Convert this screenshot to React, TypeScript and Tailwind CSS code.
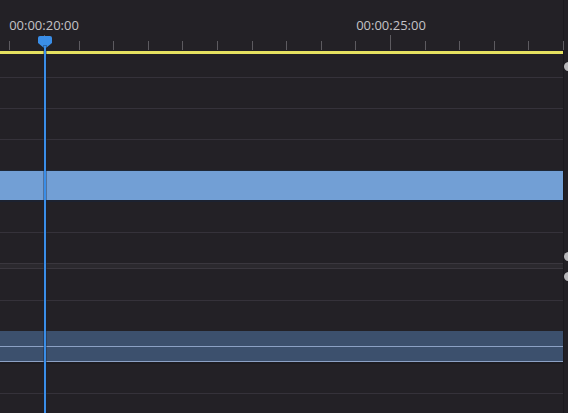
import React from 'react';

// timeline geometry (px)
const TICK_START = 44;
const TICK_STEP = 34.6;

const ticks = Array.from({ length: 17 }, (_, i) => ({
  x: TICK_START + (i - 1) * TICK_STEP,
  major: i - 1 === 0 || i - 1 === 10,
}));

const labels = [
  { x: 44, text: '00:00:20:00' },
  { x: 391, text: '00:00:25:00' },
];

function Ruler() {
  return (
    <div className="relative h-[51px]">
      {labels.map((l) => (
        <span
          key={l.text}
          className="absolute top-[19px] -translate-x-1/2 text-[13px] leading-[13px] text-[#c4c3c6]"
          style={{ left: l.x }}
        >
          {l.text}
        </span>
      ))}
      {ticks.map((t, i) => (
        <div
          key={i}
          className={`absolute bottom-[1px] w-px bg-[#5d5b60] ${t.major ? 'h-[15px]' : 'h-[9px]'}`}
          style={{ left: Math.round(t.x) }}
        />
      ))}
    </div>
  );
}

function Row({ h = 'h-[31px]' }: { h?: string }) {
  return <div className={`${h} border-t border-[#35323a]`} />;
}

export default function App() {
  return (
    <div className="relative h-[413px] w-[568px] overflow-hidden bg-[#232126] font-['Open_Sans',sans-serif]">
      <div className="flex h-full">
        <div className="flex w-[563px] flex-col">
          <Ruler />
          <div className="h-[3px] bg-[#e5e160]" />

          {/* video tracks */}
          <div className="h-[23px]" />
          <Row />
          <Row />
          <Row />
          <div className="h-[31px] border-t border-[#1e2736] bg-[#729fd5]" />
          <div className="h-[32px] border-t-2 border-[#1c2230]" />
          <Row />

          {/* divider */}
          <div className="h-[6px] border-y border-[#3a373e] bg-[#2b292e]" />

          {/* audio tracks */}
          <div className="h-[31px]" />
          <Row />
          <div className="flex h-[31px] flex-col bg-[#3c506d]">
            <div className="h-[15px]" />
            <div className="h-px bg-[#8ca1c4]" />
            <div className="h-[14px]" />
            <div className="h-px bg-[#8ca1c4]" />
          </div>
          <div className="h-[31px] border-t-2 border-[#1d1c21]" />
          <Row h="h-[20px]" />
        </div>
        <div className="w-[5px] border-l border-[#1b1a1e] bg-[#222025]" />
      </div>

      {/* scroll knobs */}
      <div className="absolute left-[564px] top-[62px] h-[9px] w-[9px] rounded-full bg-[#b9b8bb]" />
      <div className="absolute left-[564px] top-[252px] h-[9px] w-[9px] rounded-full bg-[#b9b8bb]" />
      <div className="absolute left-[564px] top-[272px] h-[9px] w-[9px] rounded-full bg-[#b9b8bb]" />

      {/* playhead */}
      <svg className="absolute left-[38px] top-[36px]" width="14" height="12" viewBox="0 0 14 12">
        <path d="M2 0 H12 Q14 0 14 2 V7 L8 12 H6 L0 7 V2 Q0 0 2 0 Z" fill="#3a8ee8" />
      </svg>
      <div className="absolute bottom-0 left-[44px] top-[46px] w-[2px] bg-[#3a8ee8] shadow-[0_0_0_1px_rgba(20,30,50,0.35)]" />
    </div>
  );
}
